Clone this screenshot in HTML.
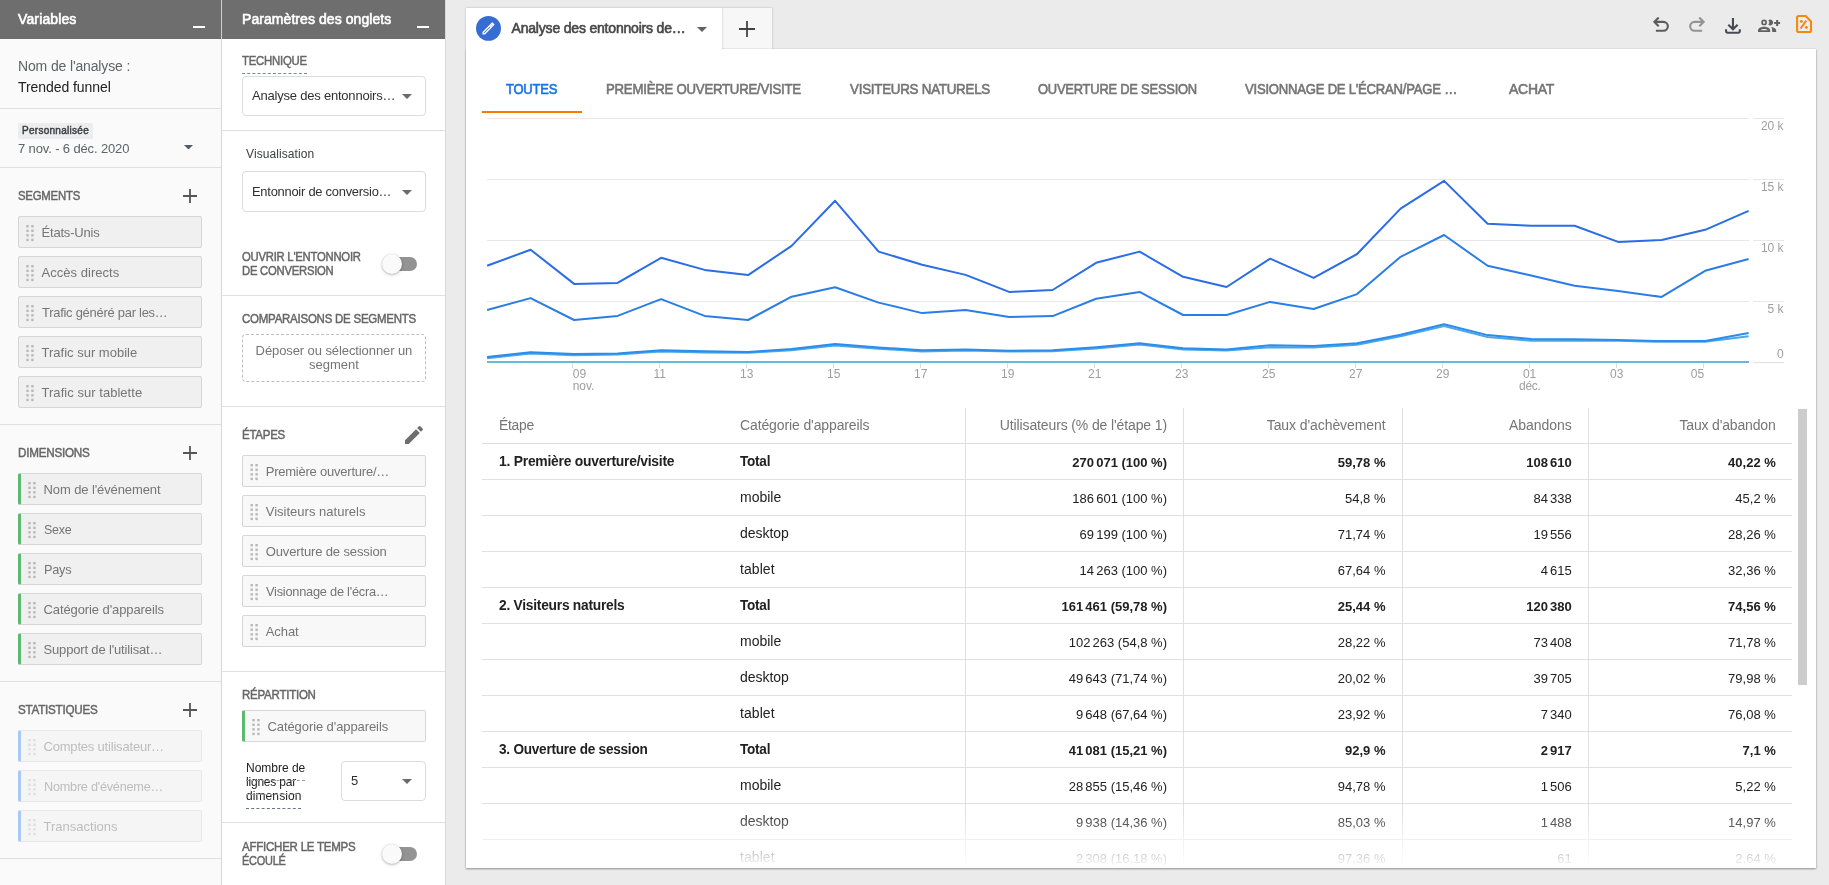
<!DOCTYPE html>
<html lang="fr"><head><meta charset="utf-8"><title>Analyse - Trended funnel</title>
<style>
html,body{margin:0;padding:0}
body{width:1829px;height:885px;overflow:hidden;background:#ebebeb;position:relative;font-family:"Liberation Sans",Arial,sans-serif;-webkit-font-smoothing:antialiased}
#root{position:absolute;left:0;top:0;width:1829px;height:885px;overflow:hidden;will-change:transform}
.r{position:absolute;display:block}
.t{position:absolute;white-space:nowrap;display:block}
</style></head>
<body>
<div id="root">
<div class="r" style="left:0px;top:0px;width:221px;height:885px;background:#fafafa;"></div>
<div class="r" style="left:221px;top:0px;width:1px;height:885px;background:#d6d6de;"></div>
<div class="r" style="left:222px;top:0px;width:223px;height:885px;background:#ffffff;"></div>
<div class="r" style="left:445px;top:0px;width:1px;height:885px;background:#d8d8de;"></div>
<div class="r" style="left:0px;top:0px;width:221px;height:39px;background:#6e6e6e;"></div>
<div class="r" style="left:222px;top:0px;width:223px;height:39px;background:#6e6e6e;"></div>
<div class="r" style="left:221px;top:0px;width:1px;height:39px;background:#cfcfcf;"></div>
<span class="t" id="t1" style="top:9px;font-size:14px;line-height:20px;color:#ffffff;-webkit-text-stroke:.6px #ffffff;letter-spacing:0.130px;left:18.0px;">Variables</span>
<span class="t" id="t2" style="top:9px;font-size:14px;line-height:20px;color:#ffffff;-webkit-text-stroke:.6px #ffffff;letter-spacing:0.065px;left:242.0px;">Paramètres des onglets</span>
<div class="r" style="left:193px;top:26px;width:12px;height:2px;background:#ffffff;"></div>
<div class="r" style="left:417px;top:26px;width:12px;height:2px;background:#ffffff;"></div>
<span class="t" id="t3" style="top:56px;font-size:14px;line-height:20px;color:#5f6368;letter-spacing:-0.141px;left:18.0px;">Nom de l'analyse :</span>
<span class="t" id="t4" style="top:77px;font-size:14px;line-height:20px;color:#212121;letter-spacing:-0.069px;left:18.0px;">Trended funnel</span>
<div class="r" style="left:0px;top:108px;width:221px;height:1px;background:#e0e0e0;"></div>
<div class="r" style="left:18px;top:123px;width:75px;height:16px;background:#ecedef;border-radius:1px;"></div>
<span class="t" id="t5" style="top:123px;font-size:10px;line-height:15px;color:#3c4043;-webkit-text-stroke:.45px #3c4043;letter-spacing:0.279px;left:22.0px;">Personnalisée</span>
<span class="t" id="t6" style="top:139px;font-size:13px;line-height:19px;color:#5f6368;letter-spacing:-0.133px;left:18.0px;">7 nov. - 6 déc. 2020</span>
<svg class="r" style="left:184px;top:144.75px" width="9" height="4.5" viewBox="0 0 10 5"><path d="M0 0h10L5 5z" fill="#545b64"/></svg>
<div class="r" style="left:0px;top:167px;width:221px;height:1px;background:#e0e0e0;"></div>
<span class="t" id="t7" style="top:187px;font-size:12px;line-height:18px;color:#666666;-webkit-text-stroke:.45px #666666;letter-spacing:-0.250px;left:18.0px;transform:scaleX(0.9488);transform-origin:left 50%;">SEGMENTS</span>
<svg class="r" style="left:183px;top:189px" width="14" height="14"><path d="M7 0v14M0 7h14" stroke="#555" stroke-width="1.8" fill="none"/></svg>
<div class="r" style="left:18px;top:216px;width:184px;height:32px;background:#f0f0f0;box-sizing:border-box;border:1px solid #d6d6d6;border-radius:2px;"></div>
<svg class="r" style="left:26px;top:225px" width="10" height="18" viewBox="0 0 10 18"><g fill="#b8b8b8" transform="translate(0.30 0.00)"><rect x="0" y="0" width="2.400" height="2.400"/><rect x="4.9" y="0" width="2.400" height="2.400"/><rect x="0" y="4.57" width="2.400" height="2.400"/><rect x="4.9" y="4.57" width="2.400" height="2.400"/><rect x="0" y="9.14" width="2.400" height="2.400"/><rect x="4.9" y="9.14" width="2.400" height="2.400"/><rect x="0" y="13.71" width="2.400" height="2.400"/><rect x="4.9" y="13.71" width="2.400" height="2.400"/></g></svg>
<span class="t" id="t8" style="top:223px;font-size:13px;line-height:19px;color:#757575;letter-spacing:-0.197px;left:41.5px;">États-Unis</span>
<div class="r" style="left:18px;top:256px;width:184px;height:32px;background:#f0f0f0;box-sizing:border-box;border:1px solid #d6d6d6;border-radius:2px;"></div>
<svg class="r" style="left:26px;top:265px" width="10" height="18" viewBox="0 0 10 18"><g fill="#b8b8b8" transform="translate(0.30 0.00)"><rect x="0" y="0" width="2.400" height="2.400"/><rect x="4.9" y="0" width="2.400" height="2.400"/><rect x="0" y="4.57" width="2.400" height="2.400"/><rect x="4.9" y="4.57" width="2.400" height="2.400"/><rect x="0" y="9.14" width="2.400" height="2.400"/><rect x="4.9" y="9.14" width="2.400" height="2.400"/><rect x="0" y="13.71" width="2.400" height="2.400"/><rect x="4.9" y="13.71" width="2.400" height="2.400"/></g></svg>
<span class="t" id="t9" style="top:263px;font-size:13px;line-height:19px;color:#757575;letter-spacing:0.037px;left:41.5px;">Accès directs</span>
<div class="r" style="left:18px;top:296px;width:184px;height:32px;background:#f0f0f0;box-sizing:border-box;border:1px solid #d6d6d6;border-radius:2px;"></div>
<svg class="r" style="left:26px;top:305px" width="10" height="18" viewBox="0 0 10 18"><g fill="#b8b8b8" transform="translate(0.30 0.00)"><rect x="0" y="0" width="2.400" height="2.400"/><rect x="4.9" y="0" width="2.400" height="2.400"/><rect x="0" y="4.57" width="2.400" height="2.400"/><rect x="4.9" y="4.57" width="2.400" height="2.400"/><rect x="0" y="9.14" width="2.400" height="2.400"/><rect x="4.9" y="9.14" width="2.400" height="2.400"/><rect x="0" y="13.71" width="2.400" height="2.400"/><rect x="4.9" y="13.71" width="2.400" height="2.400"/></g></svg>
<span class="t" id="t10" style="top:303px;font-size:13px;line-height:19px;color:#757575;letter-spacing:-0.250px;left:41.5px;transform:scaleX(0.9941);transform-origin:left 50%;">Trafic généré par les…</span>
<div class="r" style="left:18px;top:336px;width:184px;height:32px;background:#f0f0f0;box-sizing:border-box;border:1px solid #d6d6d6;border-radius:2px;"></div>
<svg class="r" style="left:26px;top:345px" width="10" height="18" viewBox="0 0 10 18"><g fill="#b8b8b8" transform="translate(0.30 0.00)"><rect x="0" y="0" width="2.400" height="2.400"/><rect x="4.9" y="0" width="2.400" height="2.400"/><rect x="0" y="4.57" width="2.400" height="2.400"/><rect x="4.9" y="4.57" width="2.400" height="2.400"/><rect x="0" y="9.14" width="2.400" height="2.400"/><rect x="4.9" y="9.14" width="2.400" height="2.400"/><rect x="0" y="13.71" width="2.400" height="2.400"/><rect x="4.9" y="13.71" width="2.400" height="2.400"/></g></svg>
<span class="t" id="t11" style="top:343px;font-size:13px;line-height:19px;color:#757575;letter-spacing:0.005px;left:41.5px;">Trafic sur mobile</span>
<div class="r" style="left:18px;top:376px;width:184px;height:32px;background:#f0f0f0;box-sizing:border-box;border:1px solid #d6d6d6;border-radius:2px;"></div>
<svg class="r" style="left:26px;top:385px" width="10" height="18" viewBox="0 0 10 18"><g fill="#b8b8b8" transform="translate(0.30 0.00)"><rect x="0" y="0" width="2.400" height="2.400"/><rect x="4.9" y="0" width="2.400" height="2.400"/><rect x="0" y="4.57" width="2.400" height="2.400"/><rect x="4.9" y="4.57" width="2.400" height="2.400"/><rect x="0" y="9.14" width="2.400" height="2.400"/><rect x="4.9" y="9.14" width="2.400" height="2.400"/><rect x="0" y="13.71" width="2.400" height="2.400"/><rect x="4.9" y="13.71" width="2.400" height="2.400"/></g></svg>
<span class="t" id="t12" style="top:383px;font-size:13px;line-height:19px;color:#757575;letter-spacing:0.039px;left:41.5px;">Trafic sur tablette</span>
<div class="r" style="left:0px;top:424px;width:221px;height:1px;background:#e0e0e0;"></div>
<span class="t" id="t13" style="top:444px;font-size:12px;line-height:18px;color:#666666;-webkit-text-stroke:.45px #666666;letter-spacing:-0.250px;left:18.0px;transform:scaleX(0.9726);transform-origin:left 50%;">DIMENSIONS</span>
<svg class="r" style="left:183px;top:446px" width="14" height="14"><path d="M7 0v14M0 7h14" stroke="#555" stroke-width="1.8" fill="none"/></svg>
<div class="r" style="left:18px;top:473px;width:184px;height:32px;background:#f0f0f0;box-sizing:border-box;border:1px solid #d6d6d6;border-left:3px solid #5bb974;border-radius:2px;"></div>
<svg class="r" style="left:28px;top:482px" width="10" height="18" viewBox="0 0 10 18"><g fill="#b8b8b8" transform="translate(0.30 0.00)"><rect x="0" y="0" width="2.400" height="2.400"/><rect x="4.9" y="0" width="2.400" height="2.400"/><rect x="0" y="4.57" width="2.400" height="2.400"/><rect x="4.9" y="4.57" width="2.400" height="2.400"/><rect x="0" y="9.14" width="2.400" height="2.400"/><rect x="4.9" y="9.14" width="2.400" height="2.400"/><rect x="0" y="13.71" width="2.400" height="2.400"/><rect x="4.9" y="13.71" width="2.400" height="2.400"/></g></svg>
<span class="t" id="t14" style="top:480px;font-size:13px;line-height:19px;color:#757575;letter-spacing:-0.107px;left:43.5px;">Nom de l'événement</span>
<div class="r" style="left:18px;top:513px;width:184px;height:32px;background:#f0f0f0;box-sizing:border-box;border:1px solid #d6d6d6;border-left:3px solid #5bb974;border-radius:2px;"></div>
<svg class="r" style="left:28px;top:522px" width="10" height="18" viewBox="0 0 10 18"><g fill="#b8b8b8" transform="translate(0.30 0.00)"><rect x="0" y="0" width="2.400" height="2.400"/><rect x="4.9" y="0" width="2.400" height="2.400"/><rect x="0" y="4.57" width="2.400" height="2.400"/><rect x="4.9" y="4.57" width="2.400" height="2.400"/><rect x="0" y="9.14" width="2.400" height="2.400"/><rect x="4.9" y="9.14" width="2.400" height="2.400"/><rect x="0" y="13.71" width="2.400" height="2.400"/><rect x="4.9" y="13.71" width="2.400" height="2.400"/></g></svg>
<span class="t" id="t15" style="top:520px;font-size:13px;line-height:19px;color:#757575;letter-spacing:-0.250px;left:43.5px;transform:scaleX(0.9567);transform-origin:left 50%;">Sexe</span>
<div class="r" style="left:18px;top:553px;width:184px;height:32px;background:#f0f0f0;box-sizing:border-box;border:1px solid #d6d6d6;border-left:3px solid #5bb974;border-radius:2px;"></div>
<svg class="r" style="left:28px;top:562px" width="10" height="18" viewBox="0 0 10 18"><g fill="#b8b8b8" transform="translate(0.30 0.00)"><rect x="0" y="0" width="2.400" height="2.400"/><rect x="4.9" y="0" width="2.400" height="2.400"/><rect x="0" y="4.57" width="2.400" height="2.400"/><rect x="4.9" y="4.57" width="2.400" height="2.400"/><rect x="0" y="9.14" width="2.400" height="2.400"/><rect x="4.9" y="9.14" width="2.400" height="2.400"/><rect x="0" y="13.71" width="2.400" height="2.400"/><rect x="4.9" y="13.71" width="2.400" height="2.400"/></g></svg>
<span class="t" id="t16" style="top:560px;font-size:13px;line-height:19px;color:#757575;letter-spacing:-0.250px;left:43.5px;transform:scaleX(0.9819);transform-origin:left 50%;">Pays</span>
<div class="r" style="left:18px;top:593px;width:184px;height:32px;background:#f0f0f0;box-sizing:border-box;border:1px solid #d6d6d6;border-left:3px solid #5bb974;border-radius:2px;"></div>
<svg class="r" style="left:28px;top:602px" width="10" height="18" viewBox="0 0 10 18"><g fill="#b8b8b8" transform="translate(0.30 0.00)"><rect x="0" y="0" width="2.400" height="2.400"/><rect x="4.9" y="0" width="2.400" height="2.400"/><rect x="0" y="4.57" width="2.400" height="2.400"/><rect x="4.9" y="4.57" width="2.400" height="2.400"/><rect x="0" y="9.14" width="2.400" height="2.400"/><rect x="4.9" y="9.14" width="2.400" height="2.400"/><rect x="0" y="13.71" width="2.400" height="2.400"/><rect x="4.9" y="13.71" width="2.400" height="2.400"/></g></svg>
<span class="t" id="t17" style="top:600px;font-size:13px;line-height:19px;color:#757575;letter-spacing:-0.098px;left:43.5px;">Catégorie d'appareils</span>
<div class="r" style="left:18px;top:633px;width:184px;height:32px;background:#f0f0f0;box-sizing:border-box;border:1px solid #d6d6d6;border-left:3px solid #5bb974;border-radius:2px;"></div>
<svg class="r" style="left:28px;top:642px" width="10" height="18" viewBox="0 0 10 18"><g fill="#b8b8b8" transform="translate(0.30 0.00)"><rect x="0" y="0" width="2.400" height="2.400"/><rect x="4.9" y="0" width="2.400" height="2.400"/><rect x="0" y="4.57" width="2.400" height="2.400"/><rect x="4.9" y="4.57" width="2.400" height="2.400"/><rect x="0" y="9.14" width="2.400" height="2.400"/><rect x="4.9" y="9.14" width="2.400" height="2.400"/><rect x="0" y="13.71" width="2.400" height="2.400"/><rect x="4.9" y="13.71" width="2.400" height="2.400"/></g></svg>
<span class="t" id="t18" style="top:640px;font-size:13px;line-height:19px;color:#757575;letter-spacing:-0.161px;left:43.5px;">Support de l'utilisat…</span>
<div class="r" style="left:0px;top:681px;width:221px;height:1px;background:#e0e0e0;"></div>
<span class="t" id="t19" style="top:701px;font-size:12px;line-height:18px;color:#666666;-webkit-text-stroke:.45px #666666;letter-spacing:-0.250px;left:18.0px;transform:scaleX(0.9706);transform-origin:left 50%;">STATISTIQUES</span>
<svg class="r" style="left:183px;top:703px" width="14" height="14"><path d="M7 0v14M0 7h14" stroke="#555" stroke-width="1.8" fill="none"/></svg>
<div class="r" style="left:18px;top:730px;width:184px;height:32px;background:#f5f5f5;box-sizing:border-box;border:1px solid #e8e8e8;border-left:3px solid #a8c7fa;border-radius:2px;"></div>
<svg class="r" style="left:28px;top:739px" width="10" height="18" viewBox="0 0 10 18"><g fill="#dedede" transform="translate(0.30 0.00)"><rect x="0" y="0" width="2.400" height="2.400"/><rect x="4.9" y="0" width="2.400" height="2.400"/><rect x="0" y="4.57" width="2.400" height="2.400"/><rect x="4.9" y="4.57" width="2.400" height="2.400"/><rect x="0" y="9.14" width="2.400" height="2.400"/><rect x="4.9" y="9.14" width="2.400" height="2.400"/><rect x="0" y="13.71" width="2.400" height="2.400"/><rect x="4.9" y="13.71" width="2.400" height="2.400"/></g></svg>
<span class="t" id="t20" style="top:737px;font-size:13px;line-height:19px;color:#bdbdbd;letter-spacing:-0.194px;left:43.5px;">Comptes utilisateur…</span>
<div class="r" style="left:18px;top:770px;width:184px;height:32px;background:#f5f5f5;box-sizing:border-box;border:1px solid #e8e8e8;border-left:3px solid #a8c7fa;border-radius:2px;"></div>
<svg class="r" style="left:28px;top:779px" width="10" height="18" viewBox="0 0 10 18"><g fill="#dedede" transform="translate(0.30 0.00)"><rect x="0" y="0" width="2.400" height="2.400"/><rect x="4.9" y="0" width="2.400" height="2.400"/><rect x="0" y="4.57" width="2.400" height="2.400"/><rect x="4.9" y="4.57" width="2.400" height="2.400"/><rect x="0" y="9.14" width="2.400" height="2.400"/><rect x="4.9" y="9.14" width="2.400" height="2.400"/><rect x="0" y="13.71" width="2.400" height="2.400"/><rect x="4.9" y="13.71" width="2.400" height="2.400"/></g></svg>
<span class="t" id="t21" style="top:777px;font-size:13px;line-height:19px;color:#bdbdbd;letter-spacing:-0.250px;left:43.5px;transform:scaleX(0.9762);transform-origin:left 50%;">Nombre d'événeme…</span>
<div class="r" style="left:18px;top:810px;width:184px;height:32px;background:#f5f5f5;box-sizing:border-box;border:1px solid #e8e8e8;border-left:3px solid #a8c7fa;border-radius:2px;"></div>
<svg class="r" style="left:28px;top:819px" width="10" height="18" viewBox="0 0 10 18"><g fill="#dedede" transform="translate(0.30 0.00)"><rect x="0" y="0" width="2.400" height="2.400"/><rect x="4.9" y="0" width="2.400" height="2.400"/><rect x="0" y="4.57" width="2.400" height="2.400"/><rect x="4.9" y="4.57" width="2.400" height="2.400"/><rect x="0" y="9.14" width="2.400" height="2.400"/><rect x="4.9" y="9.14" width="2.400" height="2.400"/><rect x="0" y="13.71" width="2.400" height="2.400"/><rect x="4.9" y="13.71" width="2.400" height="2.400"/></g></svg>
<span class="t" id="t22" style="top:817px;font-size:13px;line-height:19px;color:#bdbdbd;letter-spacing:0.014px;left:43.5px;">Transactions</span>
<div class="r" style="left:0px;top:858px;width:221px;height:1px;background:#e0e0e0;"></div>
<span class="t" id="t23" style="top:52px;font-size:12px;line-height:18px;color:#666666;-webkit-text-stroke:.45px #666666;letter-spacing:-0.250px;left:242.0px;transform:scaleX(0.9471);transform-origin:left 50%;">TECHNIQUE</span>
<div class="r" style="left:242px;top:72.5px;width:65px;height:0px;border-top:1px dashed #80868b;"></div>
<div class="r" style="left:242px;top:76px;width:184px;height:40px;box-sizing:border-box;border:1px solid #dadce0;border-radius:4px;background:#fff;"></div>
<span class="t" id="t24" style="top:86px;font-size:13px;line-height:19px;color:#303030;letter-spacing:-0.211px;left:252.0px;">Analyse des entonnoirs…</span>
<svg class="r" style="left:402px;top:94px" width="10" height="5" viewBox="0 0 10 5"><path d="M0 0h10L5 5z" fill="#6a6a6a"/></svg>
<div class="r" style="left:222px;top:130px;width:223px;height:1px;background:#e0e0e0;"></div>
<span class="t" id="t25" style="top:145px;font-size:12px;line-height:18px;color:#3c4043;letter-spacing:0.088px;left:246.0px;">Visualisation</span>
<div class="r" style="left:242px;top:171px;width:184px;height:41px;box-sizing:border-box;border:1px solid #dadce0;border-radius:4px;background:#fff;"></div>
<span class="t" id="t26" style="top:182px;font-size:13px;line-height:19px;color:#303030;letter-spacing:-0.250px;left:252.0px;transform:scaleX(0.9933);transform-origin:left 50%;">Entonnoir de conversio…</span>
<svg class="r" style="left:402px;top:190px" width="10" height="5" viewBox="0 0 10 5"><path d="M0 0h10L5 5z" fill="#6a6a6a"/></svg>
<span class="t" id="t27" style="top:248px;font-size:12px;line-height:18px;color:#666666;-webkit-text-stroke:.45px #666666;letter-spacing:-0.250px;left:242.0px;transform:scaleX(0.9401);transform-origin:left 50%;">OUVRIR L'ENTONNOIR</span>
<span class="t" id="t28" style="top:262px;font-size:12px;line-height:18px;color:#666666;-webkit-text-stroke:.45px #666666;letter-spacing:-0.250px;left:242.0px;transform:scaleX(0.9391);transform-origin:left 50%;">DE CONVERSION</span>
<div class="r" style="left:385px;top:257px;width:32px;height:14px;background:#939393;border-radius:7px;"></div>
<div class="r" style="left:381.5px;top:254px;width:20px;height:20px;background:#fafafa;border-radius:50%;box-shadow:0 1px 3px rgba(0,0,0,.28),0 0 1px rgba(0,0,0,.15);"></div>
<div class="r" style="left:222px;top:295px;width:223px;height:1px;background:#e0e0e0;"></div>
<span class="t" id="t29" style="top:310px;font-size:12px;line-height:18px;color:#666666;-webkit-text-stroke:.45px #666666;letter-spacing:-0.250px;left:242.0px;transform:scaleX(0.9570);transform-origin:left 50%;">COMPARAISONS DE SEGMENTS</span>
<div class="r" style="left:242px;top:334px;width:184px;height:48px;box-sizing:border-box;border:1px dashed #bdbdbd;border-radius:4px;"></div>
<span class="t" id="t30" style="top:341px;font-size:13px;line-height:19px;color:#757575;letter-spacing:-0.092px;left:255.6px;">Déposer ou sélectionner un</span>
<span class="t" id="t31" style="top:355px;font-size:13px;line-height:19px;color:#757575;letter-spacing:0.018px;left:309.0px;">segment</span>
<div class="r" style="left:222px;top:406px;width:223px;height:1px;background:#e0e0e0;"></div>
<span class="t" id="t32" style="top:426px;font-size:12px;line-height:18px;color:#666666;-webkit-text-stroke:.45px #666666;letter-spacing:-0.250px;left:242.0px;transform:scaleX(0.9562);transform-origin:left 50%;">ÉTAPES</span>
<svg class="r" style="left:402px;top:423px" width="24" height="24" viewBox="0 0 24 24"><path fill="#6e6e6e" d="M3 17.25V21h3.750L17.810 9.940l-3.750-3.750L3 17.250zM20.710 7.040a.996.996 0 0 0 0-1.410l-2.340-2.340a.996.996 0 0 0-1.410 0l-1.830 1.830 3.750 3.750 1.830-1.830z"/></svg>
<div class="r" style="left:242px;top:455px;width:184px;height:32px;background:#f8f8f8;box-sizing:border-box;border:1px solid #d6d6d6;border-radius:2px;"></div>
<svg class="r" style="left:250px;top:464px" width="10" height="18" viewBox="0 0 10 18"><g fill="#b8b8b8" transform="translate(0.50 0.00)"><rect x="0" y="0" width="2.400" height="2.400"/><rect x="4.9" y="0" width="2.400" height="2.400"/><rect x="0" y="4.57" width="2.400" height="2.400"/><rect x="4.9" y="4.57" width="2.400" height="2.400"/><rect x="0" y="9.14" width="2.400" height="2.400"/><rect x="4.9" y="9.14" width="2.400" height="2.400"/><rect x="0" y="13.71" width="2.400" height="2.400"/><rect x="4.9" y="13.71" width="2.400" height="2.400"/></g></svg>
<span class="t" id="t33" style="top:462px;font-size:13px;line-height:19px;color:#757575;letter-spacing:-0.225px;left:265.7px;">Première ouverture/…</span>
<div class="r" style="left:242px;top:495px;width:184px;height:32px;background:#f8f8f8;box-sizing:border-box;border:1px solid #d6d6d6;border-radius:2px;"></div>
<svg class="r" style="left:250px;top:504px" width="10" height="18" viewBox="0 0 10 18"><g fill="#b8b8b8" transform="translate(0.50 0.00)"><rect x="0" y="0" width="2.400" height="2.400"/><rect x="4.9" y="0" width="2.400" height="2.400"/><rect x="0" y="4.57" width="2.400" height="2.400"/><rect x="4.9" y="4.57" width="2.400" height="2.400"/><rect x="0" y="9.14" width="2.400" height="2.400"/><rect x="4.9" y="9.14" width="2.400" height="2.400"/><rect x="0" y="13.71" width="2.400" height="2.400"/><rect x="4.9" y="13.71" width="2.400" height="2.400"/></g></svg>
<span class="t" id="t34" style="top:502px;font-size:13px;line-height:19px;color:#757575;letter-spacing:0.018px;left:265.7px;">Visiteurs naturels</span>
<div class="r" style="left:242px;top:535px;width:184px;height:32px;background:#f8f8f8;box-sizing:border-box;border:1px solid #d6d6d6;border-radius:2px;"></div>
<svg class="r" style="left:250px;top:544px" width="10" height="18" viewBox="0 0 10 18"><g fill="#b8b8b8" transform="translate(0.50 0.00)"><rect x="0" y="0" width="2.400" height="2.400"/><rect x="4.9" y="0" width="2.400" height="2.400"/><rect x="0" y="4.57" width="2.400" height="2.400"/><rect x="4.9" y="4.57" width="2.400" height="2.400"/><rect x="0" y="9.14" width="2.400" height="2.400"/><rect x="4.9" y="9.14" width="2.400" height="2.400"/><rect x="0" y="13.71" width="2.400" height="2.400"/><rect x="4.9" y="13.71" width="2.400" height="2.400"/></g></svg>
<span class="t" id="t35" style="top:542px;font-size:13px;line-height:19px;color:#757575;letter-spacing:-0.134px;left:265.7px;">Ouverture de session</span>
<div class="r" style="left:242px;top:575px;width:184px;height:32px;background:#f8f8f8;box-sizing:border-box;border:1px solid #d6d6d6;border-radius:2px;"></div>
<svg class="r" style="left:250px;top:584px" width="10" height="18" viewBox="0 0 10 18"><g fill="#b8b8b8" transform="translate(0.50 0.00)"><rect x="0" y="0" width="2.400" height="2.400"/><rect x="4.9" y="0" width="2.400" height="2.400"/><rect x="0" y="4.57" width="2.400" height="2.400"/><rect x="4.9" y="4.57" width="2.400" height="2.400"/><rect x="0" y="9.14" width="2.400" height="2.400"/><rect x="4.9" y="9.14" width="2.400" height="2.400"/><rect x="0" y="13.71" width="2.400" height="2.400"/><rect x="4.9" y="13.71" width="2.400" height="2.400"/></g></svg>
<span class="t" id="t36" style="top:582px;font-size:13px;line-height:19px;color:#757575;letter-spacing:-0.250px;left:265.7px;transform:scaleX(0.9856);transform-origin:left 50%;">Visionnage de l'écra…</span>
<div class="r" style="left:242px;top:615px;width:184px;height:32px;background:#f8f8f8;box-sizing:border-box;border:1px solid #d6d6d6;border-radius:2px;"></div>
<svg class="r" style="left:250px;top:624px" width="10" height="18" viewBox="0 0 10 18"><g fill="#b8b8b8" transform="translate(0.50 0.00)"><rect x="0" y="0" width="2.400" height="2.400"/><rect x="4.9" y="0" width="2.400" height="2.400"/><rect x="0" y="4.57" width="2.400" height="2.400"/><rect x="4.9" y="4.57" width="2.400" height="2.400"/><rect x="0" y="9.14" width="2.400" height="2.400"/><rect x="4.9" y="9.14" width="2.400" height="2.400"/><rect x="0" y="13.71" width="2.400" height="2.400"/><rect x="4.9" y="13.71" width="2.400" height="2.400"/></g></svg>
<span class="t" id="t37" style="top:622px;font-size:13px;line-height:19px;color:#757575;letter-spacing:-0.070px;left:265.7px;">Achat</span>
<div class="r" style="left:222px;top:671px;width:223px;height:1px;background:#e0e0e0;"></div>
<span class="t" id="t38" style="top:686px;font-size:12px;line-height:18px;color:#666666;-webkit-text-stroke:.45px #666666;letter-spacing:-0.250px;left:242.0px;transform:scaleX(0.9593);transform-origin:left 50%;">RÉPARTITION</span>
<div class="r" style="left:242px;top:710px;width:184px;height:32px;background:#f8f8f8;box-sizing:border-box;border:1px solid #d6d6d6;border-left:3px solid #5bb974;border-radius:2px;"></div>
<svg class="r" style="left:252px;top:719px" width="10" height="18" viewBox="0 0 10 18"><g fill="#b8b8b8" transform="translate(0.30 0.00)"><rect x="0" y="0" width="2.400" height="2.400"/><rect x="4.9" y="0" width="2.400" height="2.400"/><rect x="0" y="4.57" width="2.400" height="2.400"/><rect x="4.9" y="4.57" width="2.400" height="2.400"/><rect x="0" y="9.14" width="2.400" height="2.400"/><rect x="4.9" y="9.14" width="2.400" height="2.400"/><rect x="0" y="13.71" width="2.400" height="2.400"/><rect x="4.9" y="13.71" width="2.400" height="2.400"/></g></svg>
<span class="t" id="t39" style="top:717px;font-size:13px;line-height:19px;color:#757575;letter-spacing:-0.088px;left:267.5px;">Catégorie d'appareils</span>
<span class="t" id="t40" style="top:759px;font-size:12px;line-height:18px;color:#212121;letter-spacing:-0.019px;left:246.0px;">Nombre de</span>
<span class="t" id="t41" style="top:773px;font-size:12px;line-height:18px;color:#212121;letter-spacing:-0.203px;left:246.0px;">lignes par</span>
<span class="t" id="t42" style="top:787px;font-size:12px;line-height:18px;color:#212121;letter-spacing:0.089px;left:246.0px;">dimension</span>
<div class="r" style="left:246px;top:780px;width:59px;height:0px;border-top:1px dashed #9aa0a6;"></div>
<div class="r" style="left:246px;top:794px;width:51px;height:0px;border-top:1px dashed #a8adb3;"></div>
<div class="r" style="left:246px;top:808px;width:55px;height:0px;border-top:1px dashed #6b7785;"></div>
<div class="r" style="left:341px;top:761px;width:85px;height:40px;box-sizing:border-box;border:1px solid #dadce0;border-radius:4px;background:#fff;"></div>
<span class="t" id="t43" style="top:771px;font-size:13px;line-height:19px;color:#303030;left:351.0px;">5</span>
<svg class="r" style="left:402px;top:779px" width="10" height="5" viewBox="0 0 10 5"><path d="M0 0h10L5 5z" fill="#6a6a6a"/></svg>
<div class="r" style="left:222px;top:822px;width:223px;height:1px;background:#e0e0e0;"></div>
<span class="t" id="t44" style="top:838px;font-size:12px;line-height:18px;color:#666666;-webkit-text-stroke:.45px #666666;letter-spacing:-0.250px;left:242.0px;transform:scaleX(0.9601);transform-origin:left 50%;">AFFICHER LE TEMPS</span>
<span class="t" id="t45" style="top:852px;font-size:12px;line-height:18px;color:#666666;-webkit-text-stroke:.45px #666666;letter-spacing:-0.250px;left:242.0px;transform:scaleX(0.9110);transform-origin:left 50%;">ÉCOULÉ</span>
<div class="r" style="left:385px;top:847px;width:32px;height:14px;background:#939393;border-radius:7px;"></div>
<div class="r" style="left:381.5px;top:844px;width:20px;height:20px;background:#fafafa;border-radius:50%;box-shadow:0 1px 3px rgba(0,0,0,.28),0 0 1px rgba(0,0,0,.15);"></div>
<div class="r" style="left:722px;top:8px;width:50px;height:41px;background:#f7f7f7;box-shadow:0 0 2px rgba(0,0,0,.25);"></div>
<div class="r" style="left:466px;top:49px;width:1350px;height:819px;background:#fff;box-shadow:0 1px 2px rgba(0,0,0,.38),0 0 1px rgba(0,0,0,.2);"></div>
<div class="r" style="left:466px;top:8px;width:256px;height:42px;background:#fff;box-shadow:0 0 2px rgba(0,0,0,.25);clip-path:inset(-3px -3px 0 -3px);"></div>
<div class="r" style="left:466px;top:46px;width:256px;height:8px;background:#fff;"></div>
<svg class="r" style="left:476px;top:15px" width="26" height="27" viewBox="0 0 26 27"><circle cx="12.500" cy="13.400" r="12.450" fill="#376dd2"/><g transform="translate(4.500 5.400) scale(.6667)"><path fill="#fff" d="M14.060 9.020l.920.920L5.920 19H5v-.920l9.060-9.060M17.660 3c-.250 0-.510.100-.700.290l-1.830 1.830 3.750 3.750 1.830-1.830c.390-.390.390-1.020 0-1.410l-2.340-2.340c-.200-.200-.450-.290-.710-.290zm-3.600 3.190L3 17.250V21h3.750L17.810 9.940l-3.750-3.750z"/><path fill="#fff" d="M15.130 5.120l3.750 3.750-1.070 1.070-3.750-3.750z"/></g></svg>
<span class="t" id="t46" style="top:18px;font-size:14px;line-height:20px;color:#484848;-webkit-text-stroke:.6px #484848;letter-spacing:-0.188px;left:511.5px;">Analyse des entonnoirs de…</span>
<svg class="r" style="left:697px;top:26.5px" width="10" height="5" viewBox="0 0 10 5"><path d="M0 0h10L5 5z" fill="#5f6368"/></svg>
<svg class="r" style="left:739px;top:20.8px" width="16" height="16"><path d="M8 0v16M0 8h16" stroke="#424242" stroke-width="1.8" fill="none"/></svg>
<svg class="r" style="left:1653px;top:17px" width="17" height="16" viewBox="0 0 17 16"><path d="M5.7 .5L1.4 4.9l4.3 4.4M1.4 4.9h9a4.450 4.450 0 0 1 0 8.900H2.900" fill="none" stroke="#5c5c5c" stroke-width="2.100"/></svg>
<svg class="r" style="left:1688px;top:17px" width="17" height="16" viewBox="0 0 17 16"><path transform="translate(17 0) scale(-1 1)" d="M5.7 .5L1.4 4.9l4.3 4.4M1.4 4.9h9a4.450 4.450 0 0 1 0 8.900H2.900" fill="none" stroke="#939393" stroke-width="2.100"/></svg>
<svg class="r" style="left:1725px;top:18px" width="16" height="16" viewBox="0 0 16 16"><path d="M7.950 0V10.600M3.300 6.700l4.650 4.650 4.650-4.650M1.100 11.200v2.050a1.500 1.500 0 0 0 1.500 1.500h10.700a1.500 1.500 0 0 0 1.500-1.500V11.200" fill="none" stroke="#444b55" stroke-width="2.100"/></svg>
<svg class="r" style="left:1757px;top:19px" width="24" height="14" viewBox="0 0 24 14"><g fill="#616161" transform="translate(1 .4)"><path fill-rule="evenodd" d="M6.120 .190a2.870 2.870 0 1 0 0 5.740a2.870 2.870 0 1 0 0-5.740zM6.120 1.860a1.200 1.200 0 1 1 0 2.400a1.200 1.200 0 1 1 0-2.400z"/><path fill-rule="evenodd" d="M0 12.600v-1.700c0-2.300 4-3.450 6.100-3.450s6.100 1.150 6.100 3.450v1.700zM2.500 10.750h7.200c-.5-.65-2.200-1.150-3.600-1.150s-3.100.5-3.600 1.150z"/><path d="M10.300 .900a2.870 2.870 0 1 1 0 4.320a3.300 3.300 0 0 0 0-4.320z"/><path d="M13 7.550C16.200 7.800 18.200 9.200 18.200 11V12.600H14.200V11C14.200 9.600 13.800 8.500 13 7.550z"/><path d="M18.100 .700h2.100v1.900h1.900v2.100h-1.900v1.900h-2.100v-1.900h-1.900v-2.100h1.900z"/></g></svg>
<svg class="r" style="left:1795px;top:14px" width="18" height="20" viewBox="0 0 18 20"><path d="M3.600 2.050h7.100l5.300 5.500v8.900a1.500 1.500 0 0 1-1.500 1.500H3.600a1.500 1.500 0 0 1-1.500-1.500V3.550a1.500 1.500 0 0 1 1.500-1.500z" fill="#e9edf3" stroke="#f5890e" stroke-width="2.100" stroke-linejoin="round"/><path d="M5.600 14.600l5.600-8" stroke="#f5890e" stroke-width="1.900"/><circle cx="6.400" cy="7.500" r="1.450" fill="#f5890e"/><circle cx="11.350" cy="13.450" r="1.450" fill="#f5890e"/></svg>
<span class="t" id="t47" style="top:79px;font-size:14px;line-height:20px;color:#1a73e8;-webkit-text-stroke:.6px #1a73e8;letter-spacing:-0.250px;left:506.4px;transform:scaleX(0.9286);transform-origin:left 50%;">TOUTES</span>
<div class="r" style="left:482px;top:111px;width:100px;height:2px;background:#f57c00;"></div>
<span class="t" id="t48" style="top:79px;font-size:14px;line-height:20px;color:#757575;-webkit-text-stroke:.6px #757575;letter-spacing:-0.250px;left:606.4px;transform:scaleX(0.9431);transform-origin:left 50%;">PREMIÈRE OUVERTURE/VISITE</span>
<span class="t" id="t49" style="top:79px;font-size:14px;line-height:20px;color:#757575;-webkit-text-stroke:.6px #757575;letter-spacing:-0.250px;left:850.0px;transform:scaleX(0.9528);transform-origin:left 50%;">VISITEURS NATURELS</span>
<span class="t" id="t50" style="top:79px;font-size:14px;line-height:20px;color:#757575;-webkit-text-stroke:.6px #757575;letter-spacing:-0.250px;left:1038.0px;transform:scaleX(0.9237);transform-origin:left 50%;">OUVERTURE DE SESSION</span>
<span class="t" id="t51" style="top:79px;font-size:14px;line-height:20px;color:#757575;-webkit-text-stroke:.6px #757575;letter-spacing:-0.250px;left:1245.0px;transform:scaleX(0.9361);transform-origin:left 50%;">VISIONNAGE DE L'ÉCRAN/PAGE …</span>
<span class="t" id="t52" style="top:79px;font-size:14px;line-height:20px;color:#757575;-webkit-text-stroke:.6px #757575;letter-spacing:-0.250px;left:1509.0px;transform:scaleX(0.9962);transform-origin:left 50%;">ACHAT</span>
<svg class="r" style="left:0;top:0" width="1829" height="400" viewBox="0 0 1829 400"><path d="M487 118.5H1749M1753 118.5H1784" stroke="#e9e8e6" stroke-width="1.1"/><path d="M487 179.5H1749M1753 179.5H1784" stroke="#e9e8e6" stroke-width="1.1"/><path d="M487 240.5H1749M1753 240.5H1784" stroke="#e9e8e6" stroke-width="1.1"/><path d="M487 301.5H1749M1753 301.5H1784" stroke="#e9e8e6" stroke-width="1.1"/><path d="M1753 362.5H1784" stroke="#e0e0e0" stroke-width="1"/><path d="M572.5 363v5" stroke="#dcdcdc" stroke-width="1"/><path d="M659.5 363v5" stroke="#dcdcdc" stroke-width="1"/><path d="M746.5 363v5" stroke="#dcdcdc" stroke-width="1"/><path d="M833.5 363v5" stroke="#dcdcdc" stroke-width="1"/><path d="M920.5 363v5" stroke="#dcdcdc" stroke-width="1"/><path d="M1007.5 363v5" stroke="#dcdcdc" stroke-width="1"/><path d="M1094.5 363v5" stroke="#dcdcdc" stroke-width="1"/><path d="M1181.5 363v5" stroke="#dcdcdc" stroke-width="1"/><path d="M1268.5 363v5" stroke="#dcdcdc" stroke-width="1"/><path d="M1355.5 363v5" stroke="#dcdcdc" stroke-width="1"/><path d="M1442.5 363v5" stroke="#dcdcdc" stroke-width="1"/><path d="M1529.5 363v5" stroke="#dcdcdc" stroke-width="1"/><path d="M1616.5 363v5" stroke="#dcdcdc" stroke-width="1"/><path d="M1703.5 363v5" stroke="#dcdcdc" stroke-width="1"/><polyline points="487.1,358.2 530.6,353.6 574.1,355.2 617.6,354.4 661.1,351.6 704.6,352.4 748.1,352.8 791.6,350.2 835.1,345.4 878.6,348.7 922.1,351.4 965.6,350.5 1009.1,351.6 1052.6,351.2 1096.1,348.4 1139.6,344.6 1183.1,349.4 1226.6,350.4 1270.1,347.2 1313.6,347.6 1357.1,344.8 1400.6,336.2 1444.1,326.1 1487.6,337.0 1531.1,340.8 1574.6,340.8 1618.1,340.8 1661.6,341.8 1705.1,341.8 1748.6,336.3" fill="none" stroke="#4aa8e8" stroke-width="2" stroke-linejoin="round"/><polyline points="487.1,357.0 530.6,352.2 574.1,354.1 617.6,353.4 661.1,350.3 704.6,351.3 748.1,352.0 791.6,349.1 835.1,344.1 878.6,347.5 922.1,350.3 965.6,349.4 1009.1,350.8 1052.6,350.3 1096.1,347.2 1139.6,343.2 1183.1,348.2 1226.6,349.6 1270.1,345.3 1313.6,346.0 1357.1,343.2 1400.6,334.7 1444.1,324.2 1487.6,335.1 1531.1,338.9 1574.6,339.2 1618.1,340.1 1661.6,341.1 1705.1,341.1 1748.6,333.0" fill="none" stroke="#2b8cec" stroke-width="2" stroke-linejoin="round"/><polyline points="487.1,310.0 530.6,298.1 574.1,320.0 617.6,315.9 661.1,299.1 704.6,315.9 748.1,320.0 791.6,296.7 835.1,287.2 878.6,302.6 922.1,313.1 965.6,310.0 1009.1,316.9 1052.6,316.1 1096.1,298.8 1139.6,291.9 1183.1,315.0 1226.6,315.0 1270.1,301.9 1313.6,309.0 1357.1,294.1 1400.6,256.8 1444.1,235.0 1487.6,265.8 1531.1,275.6 1574.6,285.8 1618.1,291.0 1661.6,296.9 1705.1,270.8 1748.6,259.0" fill="none" stroke="#2a7de6" stroke-width="2" stroke-linejoin="round"/><polyline points="487.1,265.8 530.6,249.7 574.1,283.9 617.6,282.9 661.1,257.8 704.6,269.9 748.1,275.1 791.6,245.9 835.1,200.8 878.6,251.6 922.1,264.7 965.6,274.9 1009.1,291.9 1052.6,290.0 1096.1,262.8 1139.6,251.6 1183.1,276.8 1226.6,287.0 1270.1,258.7 1313.6,277.9 1357.1,254.0 1400.6,208.6 1444.1,180.9 1487.6,223.8 1531.1,225.7 1574.6,225.7 1618.1,241.9 1661.6,240.0 1705.1,229.8 1748.6,210.8" fill="none" stroke="#2a6de6" stroke-width="2" stroke-linejoin="round"/><path d="M487 362H1749" stroke="#68b8dc" stroke-width="2"/></svg>
<span class="t" id="t53" style="top:117px;font-size:12px;line-height:18px;color:#9e9e9e;right:45.4px;">20 k</span>
<span class="t" id="t54" style="top:178px;font-size:12px;line-height:18px;color:#9e9e9e;right:45.4px;">15 k</span>
<span class="t" id="t55" style="top:239px;font-size:12px;line-height:18px;color:#9e9e9e;right:45.4px;">10 k</span>
<span class="t" id="t56" style="top:300px;font-size:12px;line-height:18px;color:#9e9e9e;right:45.4px;">5 k</span>
<span class="t" id="t57" style="top:345px;font-size:12px;line-height:18px;color:#9e9e9e;right:45.4px;">0</span>
<span class="t" id="t58" style="top:365px;font-size:12px;line-height:18px;color:#9e9e9e;left:579.5px;width:60px;margin-left:-30px;text-align:center;">09</span>
<span class="t" id="t59" style="top:365px;font-size:12px;line-height:18px;color:#9e9e9e;left:659.8px;width:60px;margin-left:-30px;text-align:center;">11</span>
<span class="t" id="t60" style="top:365px;font-size:12px;line-height:18px;color:#9e9e9e;left:746.8px;width:60px;margin-left:-30px;text-align:center;">13</span>
<span class="t" id="t61" style="top:365px;font-size:12px;line-height:18px;color:#9e9e9e;left:833.8px;width:60px;margin-left:-30px;text-align:center;">15</span>
<span class="t" id="t62" style="top:365px;font-size:12px;line-height:18px;color:#9e9e9e;left:920.8px;width:60px;margin-left:-30px;text-align:center;">17</span>
<span class="t" id="t63" style="top:365px;font-size:12px;line-height:18px;color:#9e9e9e;left:1007.8px;width:60px;margin-left:-30px;text-align:center;">19</span>
<span class="t" id="t64" style="top:365px;font-size:12px;line-height:18px;color:#9e9e9e;left:1094.8px;width:60px;margin-left:-30px;text-align:center;">21</span>
<span class="t" id="t65" style="top:365px;font-size:12px;line-height:18px;color:#9e9e9e;left:1181.8px;width:60px;margin-left:-30px;text-align:center;">23</span>
<span class="t" id="t66" style="top:365px;font-size:12px;line-height:18px;color:#9e9e9e;left:1268.8px;width:60px;margin-left:-30px;text-align:center;">25</span>
<span class="t" id="t67" style="top:365px;font-size:12px;line-height:18px;color:#9e9e9e;left:1355.8px;width:60px;margin-left:-30px;text-align:center;">27</span>
<span class="t" id="t68" style="top:365px;font-size:12px;line-height:18px;color:#9e9e9e;left:1442.8px;width:60px;margin-left:-30px;text-align:center;">29</span>
<span class="t" id="t69" style="top:365px;font-size:12px;line-height:18px;color:#9e9e9e;left:1529.6px;width:60px;margin-left:-30px;text-align:center;">01</span>
<span class="t" id="t70" style="top:365px;font-size:12px;line-height:18px;color:#9e9e9e;left:1616.8px;width:60px;margin-left:-30px;text-align:center;">03</span>
<span class="t" id="t71" style="top:365px;font-size:12px;line-height:18px;color:#9e9e9e;left:1697.5px;width:60px;margin-left:-30px;text-align:center;">05</span>
<span class="t" id="t72" style="top:377px;font-size:12px;line-height:18px;color:#9e9e9e;letter-spacing:-0.049px;left:572.7px;">nov.</span>
<span class="t" id="t73" style="top:377px;font-size:12px;line-height:18px;color:#9e9e9e;letter-spacing:-0.250px;left:1519.0px;transform:scaleX(0.9960);transform-origin:left 50%;">déc.</span>
<span class="t" id="t74" style="top:415px;font-size:14px;line-height:20px;color:#757575;letter-spacing:-0.250px;left:499.0px;transform:scaleX(0.9903);transform-origin:left 50%;">Étape</span>
<span class="t" id="t75" style="top:415px;font-size:14px;line-height:20px;color:#757575;letter-spacing:-0.118px;left:740.0px;">Catégorie d'appareils</span>
<span class="t" id="t76" style="top:415px;font-size:14px;line-height:20px;color:#757575;letter-spacing:-0.122px;right:662.0px;">Utilisateurs (% de l'étape 1)</span>
<span class="t" id="t77" style="top:415px;font-size:14px;line-height:20px;color:#757575;letter-spacing:-0.083px;right:443.5px;">Taux d'achèvement</span>
<span class="t" id="t78" style="top:415px;font-size:14px;line-height:20px;color:#757575;letter-spacing:-0.020px;right:257.2px;">Abandons</span>
<span class="t" id="t79" style="top:415px;font-size:14px;line-height:20px;color:#757575;letter-spacing:-0.160px;right:53.4px;">Taux d'abandon</span>
<div class="r" style="left:482px;top:443px;width:1310px;height:1px;background:#dcdcdc;"></div>
<div class="r" style="left:965px;top:408px;width:1px;height:460px;background:#e0e0e0;"></div>
<div class="r" style="left:1183px;top:408px;width:1px;height:460px;background:#e0e0e0;"></div>
<div class="r" style="left:1402px;top:408px;width:1px;height:460px;background:#e0e0e0;"></div>
<div class="r" style="left:1588px;top:408px;width:1px;height:460px;background:#e0e0e0;"></div>
<span class="t" id="t80" style="top:451px;font-size:14px;line-height:20px;color:#212121;font-weight:700;letter-spacing:-0.250px;left:499.0px;transform:scaleX(0.9923);transform-origin:left 50%;">1. Première ouverture/visite</span>
<span class="t" id="t81" style="top:451px;font-size:14px;line-height:20px;color:#212121;font-weight:700;letter-spacing:-0.250px;left:740.0px;transform:scaleX(0.9693);transform-origin:left 50%;">Total</span>
<span class="t" id="t82" style="top:453px;font-size:13px;line-height:19px;color:#212121;font-weight:700;right:662.0px;">270 071 (100 %)</span>
<span class="t" id="t83" style="top:453px;font-size:13px;line-height:19px;color:#212121;font-weight:700;right:443.5px;">59,78 %</span>
<span class="t" id="t84" style="top:453px;font-size:13px;line-height:19px;color:#212121;font-weight:700;right:257.2px;">108 610</span>
<span class="t" id="t85" style="top:453px;font-size:13px;line-height:19px;color:#212121;font-weight:700;right:53.2px;">40,22 %</span>
<div class="r" style="left:482px;top:479px;width:1310px;height:1px;background:#e0e0e0;"></div>
<span class="t" id="t86" style="top:487px;font-size:14px;line-height:20px;color:#212121;letter-spacing:-0.008px;left:740.0px;">mobile</span>
<span class="t" id="t87" style="top:489px;font-size:13px;line-height:19px;color:#212121;right:662.0px;">186 601 (100 %)</span>
<span class="t" id="t88" style="top:489px;font-size:13px;line-height:19px;color:#212121;right:443.5px;">54,8 %</span>
<span class="t" id="t89" style="top:489px;font-size:13px;line-height:19px;color:#212121;right:257.2px;">84 338</span>
<span class="t" id="t90" style="top:489px;font-size:13px;line-height:19px;color:#212121;right:53.2px;">45,2 %</span>
<div class="r" style="left:482px;top:515px;width:1310px;height:1px;background:#e0e0e0;"></div>
<span class="t" id="t91" style="top:523px;font-size:14px;line-height:20px;color:#212121;letter-spacing:-0.035px;left:740.0px;">desktop</span>
<span class="t" id="t92" style="top:525px;font-size:13px;line-height:19px;color:#212121;right:662.0px;">69 199 (100 %)</span>
<span class="t" id="t93" style="top:525px;font-size:13px;line-height:19px;color:#212121;right:443.5px;">71,74 %</span>
<span class="t" id="t94" style="top:525px;font-size:13px;line-height:19px;color:#212121;right:257.2px;">19 556</span>
<span class="t" id="t95" style="top:525px;font-size:13px;line-height:19px;color:#212121;right:53.2px;">28,26 %</span>
<div class="r" style="left:482px;top:551px;width:1310px;height:1px;background:#e0e0e0;"></div>
<span class="t" id="t96" style="top:559px;font-size:14px;line-height:20px;color:#212121;letter-spacing:0.058px;left:740.0px;">tablet</span>
<span class="t" id="t97" style="top:561px;font-size:13px;line-height:19px;color:#212121;right:662.0px;">14 263 (100 %)</span>
<span class="t" id="t98" style="top:561px;font-size:13px;line-height:19px;color:#212121;right:443.5px;">67,64 %</span>
<span class="t" id="t99" style="top:561px;font-size:13px;line-height:19px;color:#212121;right:257.2px;">4 615</span>
<span class="t" id="t100" style="top:561px;font-size:13px;line-height:19px;color:#212121;right:53.2px;">32,36 %</span>
<div class="r" style="left:482px;top:587px;width:1310px;height:1px;background:#e0e0e0;"></div>
<span class="t" id="t101" style="top:595px;font-size:14px;line-height:20px;color:#212121;font-weight:700;letter-spacing:-0.250px;left:499.0px;transform:scaleX(0.9838);transform-origin:left 50%;">2. Visiteurs naturels</span>
<span class="t" id="t102" style="top:595px;font-size:14px;line-height:20px;color:#212121;font-weight:700;letter-spacing:-0.250px;left:740.0px;transform:scaleX(0.9693);transform-origin:left 50%;">Total</span>
<span class="t" id="t103" style="top:597px;font-size:13px;line-height:19px;color:#212121;font-weight:700;right:662.0px;">161 461 (59,78 %)</span>
<span class="t" id="t104" style="top:597px;font-size:13px;line-height:19px;color:#212121;font-weight:700;right:443.5px;">25,44 %</span>
<span class="t" id="t105" style="top:597px;font-size:13px;line-height:19px;color:#212121;font-weight:700;right:257.2px;">120 380</span>
<span class="t" id="t106" style="top:597px;font-size:13px;line-height:19px;color:#212121;font-weight:700;right:53.2px;">74,56 %</span>
<div class="r" style="left:482px;top:623px;width:1310px;height:1px;background:#e0e0e0;"></div>
<span class="t" id="t107" style="top:631px;font-size:14px;line-height:20px;color:#212121;letter-spacing:-0.008px;left:740.0px;">mobile</span>
<span class="t" id="t108" style="top:633px;font-size:13px;line-height:19px;color:#212121;right:662.0px;">102 263 (54,8 %)</span>
<span class="t" id="t109" style="top:633px;font-size:13px;line-height:19px;color:#212121;right:443.5px;">28,22 %</span>
<span class="t" id="t110" style="top:633px;font-size:13px;line-height:19px;color:#212121;right:257.2px;">73 408</span>
<span class="t" id="t111" style="top:633px;font-size:13px;line-height:19px;color:#212121;right:53.2px;">71,78 %</span>
<div class="r" style="left:482px;top:659px;width:1310px;height:1px;background:#e0e0e0;"></div>
<span class="t" id="t112" style="top:667px;font-size:14px;line-height:20px;color:#212121;letter-spacing:-0.035px;left:740.0px;">desktop</span>
<span class="t" id="t113" style="top:669px;font-size:13px;line-height:19px;color:#212121;right:662.0px;">49 643 (71,74 %)</span>
<span class="t" id="t114" style="top:669px;font-size:13px;line-height:19px;color:#212121;right:443.5px;">20,02 %</span>
<span class="t" id="t115" style="top:669px;font-size:13px;line-height:19px;color:#212121;right:257.2px;">39 705</span>
<span class="t" id="t116" style="top:669px;font-size:13px;line-height:19px;color:#212121;right:53.2px;">79,98 %</span>
<div class="r" style="left:482px;top:695px;width:1310px;height:1px;background:#e0e0e0;"></div>
<span class="t" id="t117" style="top:703px;font-size:14px;line-height:20px;color:#212121;letter-spacing:0.058px;left:740.0px;">tablet</span>
<span class="t" id="t118" style="top:705px;font-size:13px;line-height:19px;color:#212121;right:662.0px;">9 648 (67,64 %)</span>
<span class="t" id="t119" style="top:705px;font-size:13px;line-height:19px;color:#212121;right:443.5px;">23,92 %</span>
<span class="t" id="t120" style="top:705px;font-size:13px;line-height:19px;color:#212121;right:257.2px;">7 340</span>
<span class="t" id="t121" style="top:705px;font-size:13px;line-height:19px;color:#212121;right:53.2px;">76,08 %</span>
<div class="r" style="left:482px;top:731px;width:1310px;height:1px;background:#e0e0e0;"></div>
<span class="t" id="t122" style="top:739px;font-size:14px;line-height:20px;color:#212121;font-weight:700;letter-spacing:-0.250px;left:499.0px;transform:scaleX(0.9707);transform-origin:left 50%;">3. Ouverture de session</span>
<span class="t" id="t123" style="top:739px;font-size:14px;line-height:20px;color:#212121;font-weight:700;letter-spacing:-0.250px;left:740.0px;transform:scaleX(0.9693);transform-origin:left 50%;">Total</span>
<span class="t" id="t124" style="top:741px;font-size:13px;line-height:19px;color:#212121;font-weight:700;right:662.0px;">41 081 (15,21 %)</span>
<span class="t" id="t125" style="top:741px;font-size:13px;line-height:19px;color:#212121;font-weight:700;right:443.5px;">92,9 %</span>
<span class="t" id="t126" style="top:741px;font-size:13px;line-height:19px;color:#212121;font-weight:700;right:257.2px;">2 917</span>
<span class="t" id="t127" style="top:741px;font-size:13px;line-height:19px;color:#212121;font-weight:700;right:53.2px;">7,1 %</span>
<div class="r" style="left:482px;top:767px;width:1310px;height:1px;background:#e0e0e0;"></div>
<span class="t" id="t128" style="top:775px;font-size:14px;line-height:20px;color:#212121;letter-spacing:-0.008px;left:740.0px;">mobile</span>
<span class="t" id="t129" style="top:777px;font-size:13px;line-height:19px;color:#212121;right:662.0px;">28 855 (15,46 %)</span>
<span class="t" id="t130" style="top:777px;font-size:13px;line-height:19px;color:#212121;right:443.5px;">94,78 %</span>
<span class="t" id="t131" style="top:777px;font-size:13px;line-height:19px;color:#212121;right:257.2px;">1 506</span>
<span class="t" id="t132" style="top:777px;font-size:13px;line-height:19px;color:#212121;right:53.2px;">5,22 %</span>
<div class="r" style="left:482px;top:803px;width:1310px;height:1px;background:#e0e0e0;"></div>
<span class="t" id="t133" style="top:811px;font-size:14px;line-height:20px;color:#212121;letter-spacing:-0.035px;left:740.0px;">desktop</span>
<span class="t" id="t134" style="top:813px;font-size:13px;line-height:19px;color:#212121;right:662.0px;">9 938 (14,36 %)</span>
<span class="t" id="t135" style="top:813px;font-size:13px;line-height:19px;color:#212121;right:443.5px;">85,03 %</span>
<span class="t" id="t136" style="top:813px;font-size:13px;line-height:19px;color:#212121;right:257.2px;">1 488</span>
<span class="t" id="t137" style="top:813px;font-size:13px;line-height:19px;color:#212121;right:53.2px;">14,97 %</span>
<div class="r" style="left:482px;top:839px;width:1310px;height:1px;background:#e0e0e0;"></div>
<span class="t" id="t138" style="top:847px;font-size:14px;line-height:20px;color:#212121;letter-spacing:0.058px;left:740.0px;">tablet</span>
<span class="t" id="t139" style="top:849px;font-size:13px;line-height:19px;color:#212121;right:662.0px;">2 308 (16,18 %)</span>
<span class="t" id="t140" style="top:849px;font-size:13px;line-height:19px;color:#212121;right:443.5px;">97,36 %</span>
<span class="t" id="t141" style="top:849px;font-size:13px;line-height:19px;color:#212121;right:257.2px;">61</span>
<span class="t" id="t142" style="top:849px;font-size:13px;line-height:19px;color:#212121;right:53.2px;">2,64 %</span>
<div class="r" style="left:467px;top:808px;width:1340px;height:60px;background:linear-gradient(to bottom,rgba(255,255,255,0),rgba(255,255,255,1));"></div>
<div class="r" style="left:1798px;top:409px;width:9px;height:276px;background:#cccccc;"></div>
</div>
</body></html>
